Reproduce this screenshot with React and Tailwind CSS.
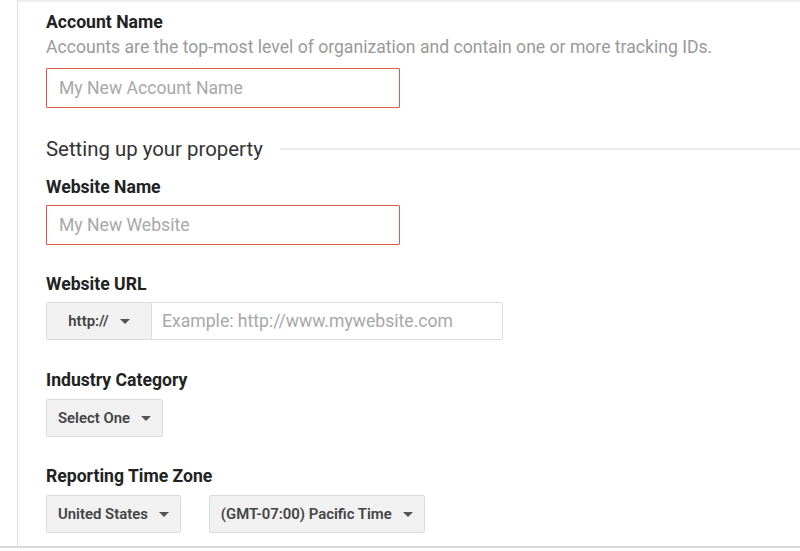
const Caret = () => (
  <svg width="10" height="5" viewBox="0 0 10 5" className="ml-[11px] shrink-0">
    <path d="M0 0 L10 0 L5 5 Z" fill="#555" />
  </svg>
);

const SelectButton = ({ label, className = "" }) => (
  <button
    className={`flex items-center h-[38px] px-[11px] bg-[#f1f1f1] border border-[#dcdcdc] rounded-[2px] text-[14.9px] font-semibold text-[#444] ${className}`}
  >
    {label}
    <Caret />
  </button>
);

const Label = ({ children, className = "" }) => (
  <div className={`text-[17.6px] font-bold text-[#222] leading-[20px] ${className}`}>
    {children}
  </div>
);

export default function App() {
  return (
    <div
      className="w-[800px] h-[551px] bg-white overflow-hidden flex flex-col"
      style={{ fontFamily: "Roboto, 'Liberation Sans', sans-serif" }}
    >
      <div className="flex flex-1 min-h-0">
        <div className="w-[18px] border-r border-[#dedede] bg-white" />
        <div className="flex-1 flex flex-col pl-[28px] pt-[12px] shadow-[inset_0_3px_3px_-2px_rgba(0,0,0,0.12)]">
          {/* Account */}
          <Label>Account Name</Label>
          <div className="text-[17.6px] text-[#9a9a9a] leading-[20px] mt-[5px]">
            Accounts are the top-most level of organization and contain one or more tracking IDs.
          </div>
          <input
            placeholder="My New Account Name"
            className="mt-[11px] w-[354px] h-[40px] border border-[#e0574a] rounded-[1px] px-[12px] text-[17.6px] placeholder-[#a8a8a8] outline-none"
          />

          {/* Property */}
          <div className="flex items-center mt-[29px]">
            <div className="text-[20.4px] text-[#333] leading-[24px]">Setting up your property</div>
            <div className="flex-1 h-[2px] bg-[#ececec] ml-[17px]" />
          </div>

          <Label className="mt-[16px]">Website Name</Label>
          <input
            placeholder="My New Website"
            className="mt-[8px] w-[354px] h-[40px] border border-[#e0574a] rounded-[1px] px-[12px] text-[17.6px] placeholder-[#a8a8a8] outline-none"
          />

          <Label className="mt-[29px]">Website URL</Label>
          <div className="flex mt-[8px] h-[38px] w-[457px] border border-[#dcdcdc] rounded-[2px]">
            <button className="flex items-center justify-center w-[105px] bg-[#f1f1f1] border-r border-[#dcdcdc] text-[14.9px] font-semibold text-[#444]">
              http://
              <Caret />
            </button>
            <input
              placeholder="Example: http://www.mywebsite.com"
              className="flex-1 px-[10px] text-[17.6px] placeholder-[#a8a8a8] outline-none"
            />
          </div>

          <Label className="mt-[30px]">Industry Category</Label>
          <div className="flex mt-[9px]">
            <SelectButton label="Select One" />
          </div>

          <Label className="mt-[29px]">Reporting Time Zone</Label>
          <div className="flex mt-[9px] gap-[28px]">
            <SelectButton label="United States" />
            <SelectButton label="(GMT-07:00) Pacific Time" />
          </div>
        </div>
      </div>
      <div className="h-[2px] bg-[#d8d8d8] mb-[3px]" />
    </div>
  );
}
